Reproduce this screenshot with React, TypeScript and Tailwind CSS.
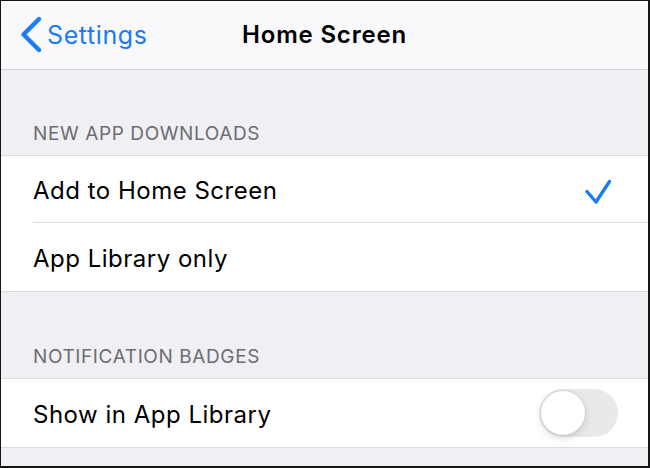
import { useState } from "react"

const font = { fontFamily: "Inter, 'Noto Sans', sans-serif" }

function SectionHeader({ title, height }: { title: string; height: string }) {
  return (
    <div className={`${height} flex items-end pb-[10px] px-[32px]`}>
      <span className="text-[19px] leading-[23px] text-[#6d6d72] tracking-[0.6px]">{title}</span>
    </div>
  )
}

function Check() {
  return (
    <svg width="26" height="26" viewBox="0 0 26 26" fill="none">
      <path d="M2 13.5 L11 24 L24.5 3.5" stroke="#1c7cf3" strokeWidth="3.4" strokeLinecap="round" strokeLinejoin="round" />
    </svg>
  )
}

export default function App() {
  const [selected, setSelected] = useState("home")
  const [badges, setBadges] = useState(false)

  return (
    <div
      className="w-[650px] h-[468px] overflow-hidden bg-[#efeff4] border-l border-t border-r-2 border-b-2 border-[#151515] flex flex-col"
      style={font}
    >
      <header className="h-[69px] shrink-0 bg-[#f9f9fb] border-b border-[#d4d4d7] grid grid-cols-[1fr_auto_1fr] items-center">
        <button className="flex items-center gap-[4px] pl-[18px] text-[#1c7cf3]">
          <svg width="24" height="38" viewBox="0 0 24 38" fill="none">
            <path d="M20 3 L4.5 18.5 L20 34" stroke="#1c7cf3" strokeWidth="4.4" strokeLinecap="round" strokeLinejoin="round" />
          </svg>
          <span className="text-[25px] leading-none tracking-[0.6px]">Settings</span>
        </button>
        <h1 className="text-[24px] font-semibold text-black tracking-[0.8px]">Home Screen</h1>
        <div />
      </header>

      <SectionHeader title="NEW APP DOWNLOADS" height="h-[85px]" />
      <section className="bg-white border-y border-[#dcdcdf]">
        <div className="pl-[32px]">
          <button
            onClick={() => setSelected("home")}
            className="w-full h-[67px] pt-[3px] flex items-center justify-between pr-[37px] border-b border-[#dcdcdf]"
          >
            <span className="text-[24px] text-black tracking-[0.5px]">Add to Home Screen</span>
            {selected === "home" && <Check />}
          </button>
        </div>
        <div className="pl-[32px]">
          <button
            onClick={() => setSelected("library")}
            className="w-full h-[68px] pt-[3px] flex items-center justify-between pr-[37px]"
          >
            <span className="text-[24px] text-black tracking-[0.5px]">App Library only</span>
            {selected === "library" && <Check />}
          </button>
        </div>
      </section>

      <SectionHeader title="NOTIFICATION BADGES" height="h-[86px]" />
      <section className="bg-white border-y border-[#dcdcdf]">
        <div className="h-[68px] flex items-center justify-between pl-[32px] pr-[30px]">
          <span className="text-[24px] text-black tracking-[0.5px] pt-[3px]">Show in App Library</span>
          <button
            onClick={() => setBadges(!badges)}
            className={`w-[79px] h-[48px] rounded-full p-[2px] flex ${badges ? "bg-[#34c759] justify-end" : "bg-[#e9e9eb] justify-start"}`}
          >
            <span className="w-[44px] h-[44px] rounded-full bg-white shadow-[0_3px_8px_rgba(0,0,0,0.15),0_0_0_1px_rgba(0,0,0,0.04)]" />
          </button>
        </div>
      </section>
    </div>
  )
}
